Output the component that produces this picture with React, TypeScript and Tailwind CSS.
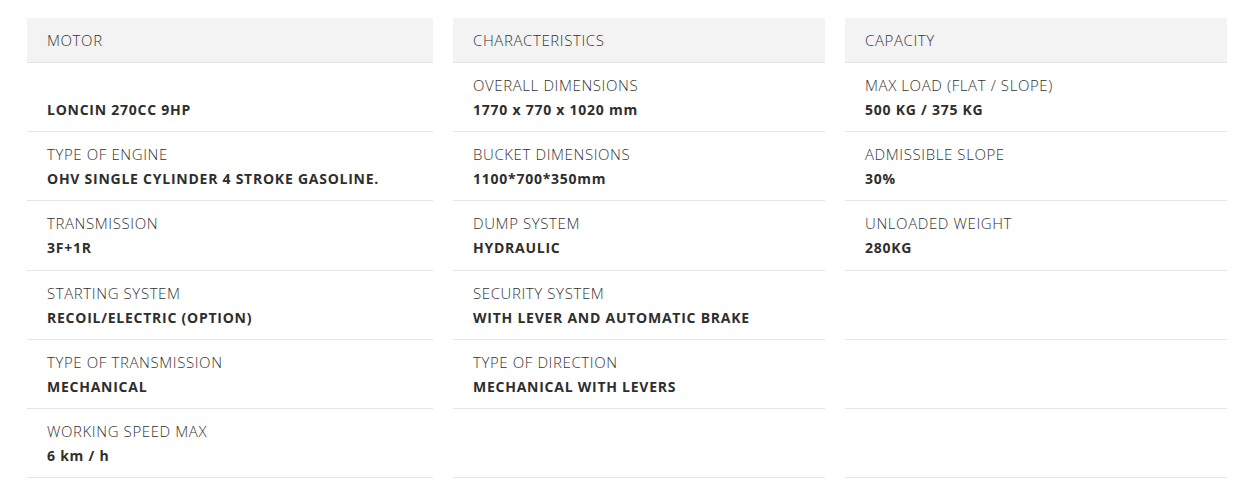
import React from "react";

type Row = { label: string; value: string };

const cols: { title: string; width: string; rows: Row[] }[] = [
  {
    title: "MOTOR",
    width: "w-[406px]",
    rows: [
      { label: "", value: "LONCIN 270CC 9HP" },
      { label: "TYPE OF ENGINE", value: "OHV SINGLE CYLINDER 4 STROKE GASOLINE." },
      { label: "TRANSMISSION", value: "3F+1R" },
      { label: "STARTING SYSTEM", value: "RECOIL/ELECTRIC (OPTION)" },
      { label: "TYPE OF TRANSMISSION", value: "MECHANICAL" },
      { label: "WORKING SPEED MAX", value: "6 km / h" },
    ],
  },
  {
    title: "CHARACTERISTICS",
    width: "w-[372px]",
    rows: [
      { label: "OVERALL DIMENSIONS", value: "1770 x 770 x 1020 mm" },
      { label: "BUCKET DIMENSIONS", value: "1100*700*350mm" },
      { label: "DUMP SYSTEM", value: "HYDRAULIC" },
      { label: "SECURITY SYSTEM", value: "WITH LEVER AND AUTOMATIC BRAKE" },
      { label: "TYPE OF DIRECTION", value: "MECHANICAL WITH LEVERS" },
      { label: "", value: "" },
    ],
  },
  {
    title: "CAPACITY",
    width: "w-[382px]",
    rows: [
      { label: "MAX LOAD (FLAT / SLOPE)", value: "500 KG / 375 KG" },
      { label: "ADMISSIBLE SLOPE", value: "30%" },
      { label: "UNLOADED WEIGHT", value: "280KG" },
      { label: "", value: "" },
      { label: "", value: "" },
      { label: "", value: "" },
    ],
  },
];

export default function App() {
  return (
    <div
      className="min-h-screen bg-white pt-[18px] pl-[27px] flex gap-[20px] text-[#333]"
      style={{ fontFamily: "'Open Sans', 'Noto Sans', sans-serif" }}
    >
      {cols.map((c) => (
        <div key={c.title} className={c.width}>
          <div className="h-[45px] bg-[#f3f3f3] border-b border-[#e6e6e6] pl-[20px] flex items-center text-[15px] text-[#333] font-light tracking-[0.6px]">
            {c.title}
          </div>
          {c.rows.map((r, i) => (
            <div
              key={i}
              className="h-[69.2px] border-b border-[#e6e6e6] pl-[20px] pt-[12px]"
            >
              <div className="h-[20px] leading-[20px] text-[15px] font-light text-[#333] tracking-[0.6px]">
                {r.label}
              </div>
              <div className="mt-[5px] h-[20px] leading-[20px] text-[14px] font-bold text-[#2e2e2e] tracking-[0.75px]">
                {r.value}
              </div>
            </div>
          ))}
        </div>
      ))}
    </div>
  );
}
